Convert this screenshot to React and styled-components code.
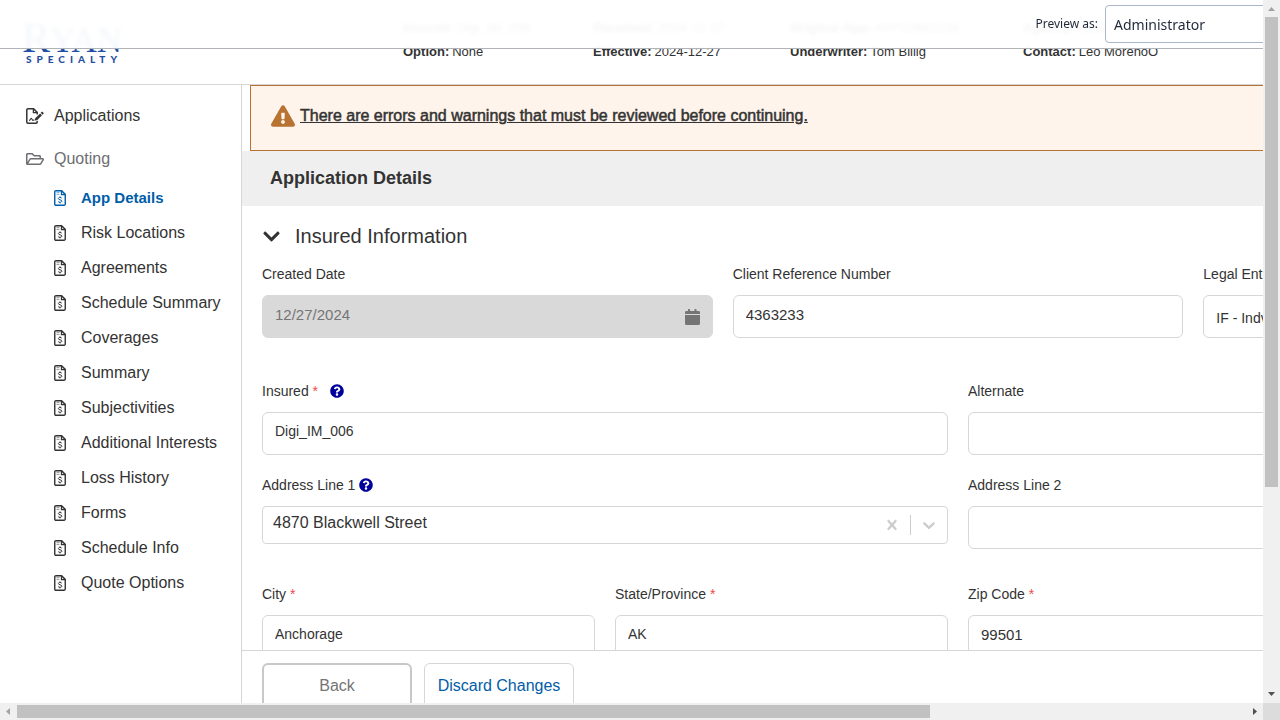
import React from "react";
import styled, { createGlobalStyle, css } from "styled-components";
import {
  FaExclamationTriangle,
  FaChevronDown,
  FaQuestionCircle,
  FaRegFolderOpen,
} from "react-icons/fa";

const color = {
  text: "#333333",
  muted: "#6d6e71",
  line: "#d6d6d6",
  link: "#005da8",
  warn: "#b87333",
};

const Global = createGlobalStyle`
  *, *::before, *::after { box-sizing: border-box; }
  body {
    margin: 0;
    background: #fff;
    color: ${color.text};
    font-family: "Liberation Sans", Arial, sans-serif;
    font-size: 14px;
  }
  button, input, select { font: inherit; color: inherit; }
`;

const Shell = styled.div`
  display: grid;
  grid-template-columns: minmax(0, 1fr) 17px;
  grid-template-rows: minmax(0, 1fr) 17px;
  height: 100vh;
`;

const Viewport = styled.div`
  position: relative;
  overflow: hidden;
`;

const Canvas = styled.div`
  display: flex;
  flex-direction: column;
  min-width: 1700px;
  height: calc(100% + 36px);
`;

/* Preview bar floating over the page */
const PreviewBar = styled.div`
  position: absolute;
  top: 0;
  left: 0;
  right: -82px;
  z-index: 5;
  display: flex;
  align-items: center;
  justify-content: flex-end;
  gap: 7px;
  height: 49px;
  border-bottom: 1px solid #b0b3b8;
  background: rgba(255, 255, 255, 0.95);
  backdrop-filter: blur(2px);
  color: #1f2937;
  font-family: "Noto Sans", sans-serif;
`;

const PreviewLabel = styled.label`
  font-size: 12px;
  line-height: 20px;
`;

const PreviewSelect = styled.select`
  width: 240px;
  height: 38px;
  padding: 0 8px;
  border: 1px solid #a9b7c6;
  border-radius: 4px;
  background: #fff;
  font-size: 14px;
  appearance: none;
`;

/* Header */
const Header = styled.header`
  display: flex;
  flex: 0 0 85px;
  border-bottom: 1px solid ${color.line};
`;

const Brand = styled.a`
  flex: 0 0 403px;
  padding: 14px 0 0 22px;
  color: #1f4fa3;
  text-decoration: none;
`;

const BrandName = styled.div`
  height: 40px;
  font-family: "Liberation Serif", serif;
  font-size: 35px;
  line-height: 48px;
`;

const BrandInitial = styled.span`
  font-size: 42px;
`;

const BrandTag = styled.div`
  padding-left: 4px;
  font-family: Lato, sans-serif;
  font-size: 10px;
  font-weight: 900;
  line-height: 10px;
  letter-spacing: 5px;
`;

const Facts = styled.dl`
  display: grid;
  grid-template-columns: 190px 197px 233px auto;
  grid-auto-rows: 24px;
  margin: 0;
  padding-top: 16px;
`;

const Fact = styled.div`
  display: flex;
  gap: 3px;
  font-size: 13px;
  line-height: 24px;
  white-space: nowrap;
`;

const Term = styled.dt`
  font-weight: 700;
`;

const Value = styled.dd`
  margin: 0;
`;

/* Body */
const Body = styled.div`
  display: flex;
  flex: 1;
  min-height: 0;
`;

const Sidebar = styled.nav`
  flex: 0 0 242px;
  padding-top: 9px;
  border-right: 1px solid ${color.line};
`;

const NavLink = styled.a`
  display: flex;
  align-items: center;
  gap: 10px;
  height: 43px;
  padding-left: 26px;
  color: ${(p) => (p.$muted ? color.muted : color.text)};
  font-size: 16px;
  text-decoration: none;
  white-space: nowrap;

  ${(p) =>
    p.$sub &&
    css`
      gap: 15px;
      height: 35px;
      padding-left: 54px;
    `}
  ${(p) =>
    p.$active &&
    css`
      color: ${color.link};
      font-size: 15px;
      font-weight: 700;
    `}
  svg {
    flex: none;
  }
`;

const Main = styled.main`
  display: flex;
  flex: 1;
  flex-direction: column;
  min-width: 0;
`;

const Scroll = styled.div`
  flex: 1;
  min-height: 0;
  overflow: hidden;
`;

const Alert = styled.div`
  display: flex;
  gap: 5px;
  height: 66px;
  margin-left: 8px;
  padding: 18px 20px;
  border: 1px solid ${color.warn};
  background: #fff4eb;
  svg {
    color: ${color.warn};
  }
`;

const AlertLink = styled.a`
  color: ${color.text};
  font-size: 16px;
  -webkit-text-stroke: 0.5px ${color.text};
  line-height: 24px;
  text-decoration: underline;
`;

const PageTitle = styled.h1`
  margin: 0;
  padding: 0 28px;
  background: #efefef;
  font-size: 18px;
  line-height: 55px;
`;

const Form = styled.form`
  padding: 18px 46px 0 20px;
`;

const SectionTitle = styled.h2`
  display: flex;
  align-items: center;
  gap: 14px;
  margin: 0 0 16px;
  font-size: 20px;
  font-weight: 400;
  line-height: 24px;
`;

const Row = styled.div`
  display: grid;
  grid-template-columns: ${(p) => p.$cols};
  align-items: start;
  gap: 20px;
  margin-bottom: ${(p) => p.$after || 20}px;
`;

const Field = styled.div`
  display: flex;
  flex-direction: column;
  gap: 11px;
  min-width: 0;
`;

const LabelLine = styled.div`
  display: flex;
  align-items: center;
  gap: ${(p) => p.$gap || 4}px;
  height: 20px;
  line-height: 20px;
  svg {
    color: #00009c;
  }
`;

const Required = styled.span`
  color: #ef4a4a;
`;

const control = css`
  width: 100%;
  height: 43px;
  border: 1px solid ${color.line};
  border-radius: 6px;
  background: #fff;
  font-size: ${(p) => p.$size || 14}px;
`;

const Input = styled.input`
  ${control}
  padding: 0 12px 5px;
  &:disabled {
    border-color: #d9d9d9;
    background: #d9d9d9;
    color: #757575;
  }
`;

const Select = styled.select`
  ${control}
  padding: 2px 12px 0;
  appearance: none;
`;

const DateBox = styled.div`
  position: relative;
  svg {
    position: absolute;
    top: 14px;
    right: 13px;
  }
`;

const Combo = styled.div`
  display: flex;
  align-items: center;
  height: 38px;
  border: 1px solid ${color.line};
  border-radius: 4px;
`;

const ComboInput = styled.input`
  flex: 1;
  min-width: 0;
  padding: 0 10px 4px;
  border: 0;
  background: none;
  font-size: 16px;
`;

const ComboButton = styled.button`
  display: flex;
  padding: 8px;
  border: 0;
  background: none;
  color: #cccccc;
`;

const Divider = styled.span`
  width: 1px;
  height: 20px;
  background: #cccccc;
`;

const Footer = styled.footer`
  display: flex;
  flex: 0 0 89px;
  align-items: flex-start;
  gap: 12px;
  padding: 12px 20px;
  border-top: 1px solid ${color.line};
  background: #fff;
`;

const ActionButton = styled.button`
  width: 150px;
  height: 46px;
  border: ${(p) => (p.$primary ? "1px" : "2px")} solid
    ${(p) => (p.$primary ? color.line : "#c8c8c8")};
  border-radius: 6px;
  background: #fff;
  color: ${(p) => (p.$primary ? color.link : "#757575")};
  font-size: 16px;
  white-space: nowrap;
  padding: 0;
`;

/* Scroll bars */
const Track = styled.div`
  display: flex;
  flex-direction: ${(p) => (p.$vertical ? "column" : "row")};
  background: #f0f0f0;
`;

const Arrow = styled.svg`
  flex: 0 0 17px;
  width: 17px;
  height: 17px;
  fill: ${(p) => (p.$idle ? "#a3a3a3" : "#505050")};
`;

const Rail = styled.div`
  flex: 1;
  padding: ${(p) => (p.$vertical ? "0 2px" : "2px 0")};
`;

const Thumb = styled.div`
  background: #c1c1c1;
  width: ${(p) => (p.$vertical ? "100%" : "74.3%")};
  height: ${(p) => (p.$vertical ? "70.3%" : "100%")};
`;

const Corner = styled.div`
  background: #dcdcdc;
`;

const InvoiceIcon = () => (
  <svg width="12" height="16" viewBox="0 0 12 16" fill="none" stroke="currentColor" aria-hidden="true">
    <path d="M2 .75h5.6L11.25 4.4V14a1.2 1.2 0 0 1-1.2 1.25H2A1.2 1.2 0 0 1 .75 14V2A1.2 1.2 0 0 1 2 .75z" strokeWidth="1.4" />
    <path d="M7.5 1v3.6H11" strokeWidth="1.3" />
    <path d="M2.5 2.6h3M2.5 4.4h3" strokeWidth="1" opacity=".5" />
    <path d="M7.7 8.1C7.3 7.6 6.7 7.5 6 7.5c-1 0-1.6.4-1.6 1.1 0 1.6 3.4.8 3.4 2.5 0 .8-.7 1.2-1.8 1.2-.8 0-1.4-.2-1.8-.7M6 6.4v1.1M6 12.3v1.1" strokeWidth="1" />
  </svg>
);

const SignatureIcon = () => (
  <svg width="18" height="16" viewBox="0 0 18 16" fill="none" stroke="currentColor" aria-hidden="true">
    <path d="M11.2 13v1a1.2 1.2 0 0 1-1.2 1.2H2A1.2 1.2 0 0 1 .8 14V2A1.2 1.2 0 0 1 2 .8h5.6l3.6 3.6v2.2" strokeWidth="1.5" />
    <path d="M7.4 1v3.7h3.8" strokeWidth="1.3" />
    <path d="M3 12.4c1 0 1.3-.3 1.7-1.5.3-.8.9-.8 1.2 0l.5 1.1c.3.5.8.5 1.1 0h1" strokeWidth="1.1" />
    <path d="M8.8 12.5l.4-2.2 4.9-4.9 1.9 1.9-4.9 4.9zM14.7 4.8l.8-.8c.4-.4.8-.4 1.2 0l.7.7c.4.4.4.8 0 1.2l-.8.8z" fill="currentColor" stroke="none" />
  </svg>
);

const CalendarIcon = () => (
  <svg width="15" height="16" viewBox="0 0 15 16" fill="#757575" aria-hidden="true">
    <path d="M0 5V3.4Q0 2 1.4 2H3V.5q0-.5.5-.5h1q.5 0 .5.5V2h4.500V.5q0-.5.5-.5h1q.5 0 .5.5V2h2.100Q15 2 15 3.400V5zM0 6h15v8.500Q15 16 13.500 16h-12Q0 16 0 14.500z" />
  </svg>
);

const ClearIcon = () => (
  <svg width="20" height="20" viewBox="0 0 20 20" fill="currentColor" aria-hidden="true">
    <path d="M14.348 14.849c-0.469 0.469-1.229 0.469-1.697 0l-2.651-3.030-2.651 3.029c-0.469 0.469-1.229 0.469-1.697 0-0.469-0.469-0.469-1.229 0-1.697l2.758-3.15-2.759-3.152c-0.469-0.469-0.469-1.228 0-1.697s1.228-0.469 1.697 0l2.652 3.031 2.651-3.031c0.469-0.469 1.228-0.469 1.697 0s0.469 1.229 0 1.697l-2.758 3.152 2.758 3.15c0.469 0.469 0.469 1.229 0 1.698z" />
  </svg>
);

const CaretIcon = () => (
  <svg width="20" height="20" viewBox="0 0 20 20" fill="currentColor" aria-hidden="true">
    <path d="M4.516 7.548c0.436-0.446 1.043-0.481 1.576 0l3.908 3.747 3.908-3.747c0.533-0.481 1.141-0.446 1.574 0 0.436 0.445 0.408 1.197 0 1.615-0.406 0.418-4.695 4.502-4.695 4.502-0.217 0.223-0.502 0.335-0.787 0.335s-0.57-0.112-0.789-0.335c0 0-4.287-4.084-4.695-4.502s-0.436-1.17 0-1.615z" />
  </svg>
);

const facts = [
  ["Insured:", "Digi_IM_006"],
  ["Received:", "2024-12-27"],
  ["Original App:", "APP12691233"],
  ["Agency:", "Ryan"],
  ["Option:", "None"],
  ["Effective:", "2024-12-27"],
  ["Underwriter:", "Tom Billig"],
  ["Contact:", "Leo MorenoO"],
];

const pages = [
  "App Details",
  "Risk Locations",
  "Agreements",
  "Schedule Summary",
  "Coverages",
  "Summary",
  "Subjectivities",
  "Additional Interests",
  "Loss History",
  "Forms",
  "Schedule Info",
  "Quote Options",
];

function Labelled({ id, label, required, help, children }) {
  return (
    <Field>
      <LabelLine $gap={help && required ? 12 : 4}>
        <label htmlFor={id}>
          {label}
          {required && <Required> *</Required>}
        </label>
        {help && <FaQuestionCircle size={14} />}
      </LabelLine>
      {children}
    </Field>
  );
}

function TextField({ id, value = "", size, ...rest }) {
  return (
    <Labelled id={id} {...rest}>
      <Input id={id} defaultValue={value} $size={size} />
    </Labelled>
  );
}

export default function App() {
  return (
    <Shell>
      <Global />
      <Viewport>
        <PreviewBar>
          <PreviewLabel htmlFor="preview">Preview as:</PreviewLabel>
          <PreviewSelect id="preview">
            <option>Administrator</option>
          </PreviewSelect>
        </PreviewBar>
        <Canvas>
          <Header>
            <Brand href="#home">
              <BrandName>
                <BrandInitial>R</BrandInitial>YAN
              </BrandName>
              <BrandTag>SPECIALTY</BrandTag>
            </Brand>
            <Facts>
              {facts.map(([term, value]) => (
                <Fact key={term}>
                  <Term>{term}</Term>
                  <Value>{value}</Value>
                </Fact>
              ))}
            </Facts>
          </Header>
          <Body>
            <Sidebar>
              <NavLink href="#applications">
                <SignatureIcon />
                Applications
              </NavLink>
              <NavLink href="#quoting" $muted>
                <FaRegFolderOpen size={18} />
                Quoting
              </NavLink>
              {pages.map((page, i) => (
                <NavLink key={page} href="#page" $sub $active={i === 0}>
                  <InvoiceIcon />
                  {page}
                </NavLink>
              ))}
            </Sidebar>
            <Main>
              <Scroll>
                <Alert role="alert">
                  <FaExclamationTriangle size={24} />
                  <AlertLink href="#review">
                    There are errors and warnings that must be reviewed before continuing.
                  </AlertLink>
                </Alert>
                <PageTitle>Application Details</PageTitle>
                <Form>
                  <SectionTitle>
                    <FaChevronDown size={19} />
                    Insured Information
                  </SectionTitle>
                  <Row $cols="repeat(3, minmax(0, 1fr))" $after={43}>
                    <Labelled id="created" label="Created Date">
                      <DateBox>
                        <Input id="created" defaultValue="12/27/2024" $size={15} disabled />
                        <CalendarIcon />
                      </DateBox>
                    </Labelled>
                    <TextField id="client-ref" label="Client Reference Number" value="4363233" size={15} />
                    <Labelled id="entity" label="Legal Entity">
                      <Select id="entity">
                        <option>IF - Indvidual</option>
                      </Select>
                    </Labelled>
                  </Row>
                  <Row $cols="repeat(2, minmax(0, 1fr))">
                    <TextField id="insured" label="Insured" value="Digi_IM_006" required help />
                    <TextField id="alternate" label="Alternate" />
                  </Row>
                  <Row $cols="repeat(2, minmax(0, 1fr))" $after={35}>
                    <Labelled id="address1" label="Address Line 1" help>
                      <Combo>
                        <ComboInput id="address1" role="combobox" aria-expanded="false" defaultValue="4870 Blackwell Street" />
                        <ComboButton type="button" aria-label="Clear">
                          <ClearIcon />
                        </ComboButton>
                        <Divider />
                        <ComboButton type="button" aria-label="Open">
                          <CaretIcon />
                        </ComboButton>
                      </Combo>
                    </Labelled>
                    <TextField id="address2" label="Address Line 2" />
                  </Row>
                  <Row $cols="repeat(4, minmax(0, 1fr))">
                    <TextField id="city" label="City" value="Anchorage" required />
                    <TextField id="state" label="State/Province" value="AK" required />
                    <TextField id="zip" label="Zip Code" value="99501" size={15} required />
                    <TextField id="county" label="County" />
                  </Row>
                </Form>
              </Scroll>
              <Footer>
                <ActionButton type="button">Back</ActionButton>
                <ActionButton type="button" $primary>
                  Discard Changes
                </ActionButton>
              </Footer>
            </Main>
          </Body>
        </Canvas>
      </Viewport>
      <Track $vertical aria-hidden="true">
        <Arrow $idle viewBox="0 0 17 17">
          <path d="M5 11L8.500 7L12 11z" />
        </Arrow>
        <Rail $vertical>
          <Thumb $vertical />
        </Rail>
        <Arrow viewBox="0 0 17 17">
          <path d="M5 6h7L8.500 10z" />
        </Arrow>
      </Track>
      <Track aria-hidden="true">
        <Arrow $idle viewBox="0 0 17 17">
          <path d="M10 5v7L6 8.500z" />
        </Arrow>
        <Rail>
          <Thumb />
        </Rail>
        <Arrow viewBox="0 0 17 17">
          <path d="M7 5v7l4-3.500z" />
        </Arrow>
      </Track>
      <Corner />
    </Shell>
  );
}
